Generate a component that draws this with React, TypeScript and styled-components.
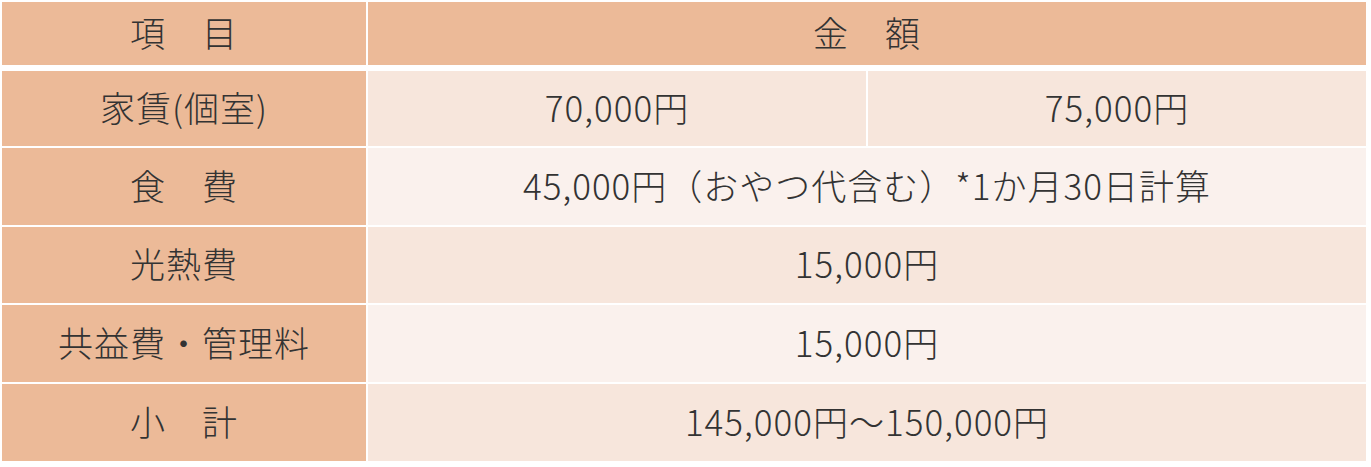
import React from 'react';
import styled, { createGlobalStyle } from 'styled-components';

const GlobalStyle = createGlobalStyle`
    html, body {
        margin: 0;
        padding: 0;
        background: #ffffff;
    }
    body {
        font-family: "Noto Sans CJK JP", "Noto Sans", sans-serif;
        color: #333333;
    }
`;

const colors = {
    label: '#ecba98',
    rowDark: '#f7e6dc',
    rowLight: '#faf1ed',
    text: '#333333',
};

const Table = styled.div`
    display: flex;
    flex-direction: column;
    gap: 2px;
    width: 1364px;
    padding: 2px;
`;

const Row = styled.div<{ height: number; gapBelow?: number }>`
    display: grid;
    grid-template-columns: 364px 1fr 1fr;
    gap: 2px;
    height: ${props => props.height}px;
    margin-bottom: ${props => props.gapBelow || 0}px;
`;

const Cell = styled.div<{ bg: string; span?: number }>`
    display: flex;
    align-items: center;
    justify-content: center;
    background: ${props => props.bg};
    grid-column: span ${props => props.span || 1};
    font-size: 35px;
    font-weight: 300;
    line-height: 1;
    letter-spacing: 1px;
    color: ${colors.text};
    white-space: nowrap;
    padding-bottom: 5px;
`;

interface Item {
    label: string;
    values: string[];
    bg: string;
    height: number;
}

const items: Item[] = [
    { label: '家賃(個室)', values: ['70,000円', '75,000円'], bg: colors.rowDark, height: 75 },
    { label: '食　費', values: ['45,000円（おやつ代含む）*1か月30日計算'], bg: colors.rowLight, height: 77 },
    { label: '光熱費', values: ['15,000円'], bg: colors.rowDark, height: 76 },
    { label: '共益費・管理料', values: ['15,000円'], bg: colors.rowLight, height: 77 },
    { label: '小　計', values: ['145,000円～150,000円'], bg: colors.rowDark, height: 77 },
];

const App = () => {
    return (
        <>
            <GlobalStyle />
            <Table>
                <Row height={63} gapBelow={4}>
                    <Cell bg={colors.label}>項　目</Cell>
                    <Cell bg={colors.label} span={2}>金　額</Cell>
                </Row>
                {items.map(item => (
                    <Row key={item.label} height={item.height}>
                        <Cell bg={colors.label}>{item.label}</Cell>
                        {item.values.map(v => (
                            <Cell key={v} bg={item.bg} span={item.values.length === 1 ? 2 : 1}>
                                {v}
                            </Cell>
                        ))}
                    </Row>
                ))}
            </Table>
        </>
    );
};

export default App;
